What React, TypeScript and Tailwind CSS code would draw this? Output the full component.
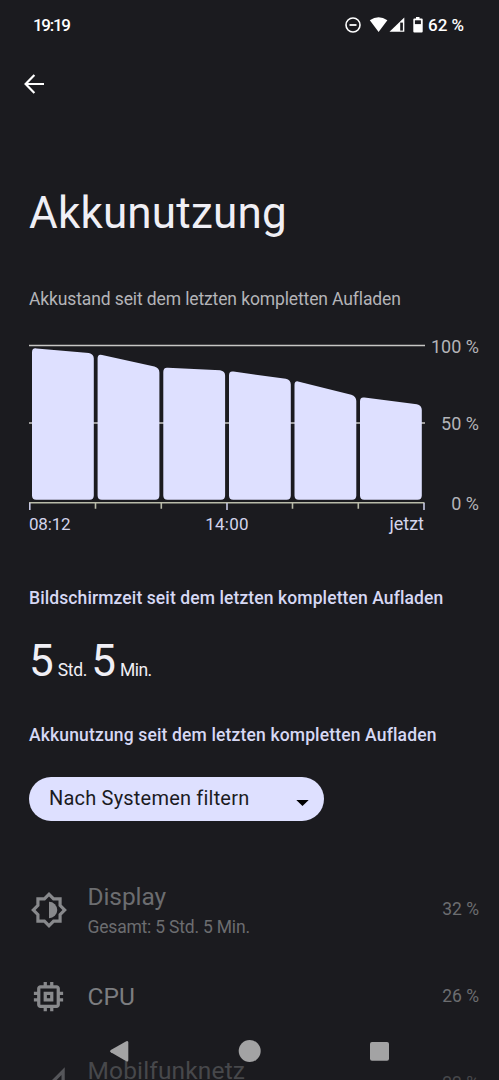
import { ReactNode } from "react";

const levels = [
  { x: 32, left: 348, right: 353.5 },
  { x: 97.6, left: 354, right: 367.5 },
  { x: 163.3, left: 367.5, right: 370.5 },
  { x: 229, left: 371, right: 379.5 },
  { x: 294.5, left: 380.5, right: 396 },
  { x: 360, left: 397, right: 405 },
];

function barPath(x: number, l: number, r: number) {
  const w = 61.8;
  const slope = (r - l) / w;
  return `M${x} ${l + 4.5}Q${x} ${l - 0.3} ${x + 4.5} ${l + 4.5 * slope}L${x + w - 5} ${r - 5 * slope}Q${x + w} ${r + 0.6} ${x + w} ${r + 5}V495.5Q${x + w} 499.7 ${x + w - 4.2} 499.7H${x + 4.2}Q${x} 499.7 ${x} 495.5Z`;
}

function StatusBar() {
  return (
    <header className="flex h-[50px] shrink-0 items-center pr-[34px] pl-[33px] text-[17px] leading-5 font-medium text-white">
      <span className="flex-1 tracking-[-1.3px]">19:19</span>
      <svg className="h-6 w-[82px]" viewBox="344 13 82 24">
        <circle cx="353" cy="25" r="7" fill="none" stroke="#fff" strokeWidth="1.6" />
        <path d="M349.5 25h7" stroke="#fff" strokeWidth="1.8" />
        <path d="M369.8 20.2Q378.5 14.2 387.4 20.2L378.6 32Z" fill="#fff" />
        <path d="M404.3 17.5V31.8H389.5Z" fill="#fff" />
        <path d="M400.2 22.6h2.7v8h-2.7z" fill="#1b1b1f" />
        <path d="M416 17h3.5v1.5h2.2q1 0 1 1v12q0 1-1 1h-7.4q-1 0-1-1v-12q0-1 1-1H416z" fill="#fff" />
        <path d="M414.9 20.3h6v3.8h-6z" fill="#1b1b1f" />
      </svg>
      <span className="ml-0.5 w-[37px] whitespace-nowrap">62 %</span>
    </header>
  );
}

function BatteryChart() {
  return (
    <section className="mt-[25px] flex h-[198px] w-[450px] text-[#b4b4b8]">
      <div className="w-[396px]">
        <svg className="h-[178px] w-[397px]" viewBox="29 336 397 178">
          <path d="M29 345.5H425M29 423H425" stroke="#c7c6c4" strokeWidth="1.6" />
          <path d="M29 502.8H424.5M95.5 503v5.7M161.3 503v5.7M292.5 503v5.7M358.3 503v5.7" fill="none" stroke="#b9bba9" strokeWidth="1.6" />
          <path d="M29.8 503v7M227 503v7M424 503v7" stroke="#c5c7e2" strokeWidth="1.6" />
          {levels.map((b) => (
            <path key={b.x} d={barPath(b.x, b.left, b.right)} fill="#dee0ff" />
          ))}
        </svg>
        <div className="flex justify-between text-[17px] leading-5 text-[#d3d4ec]">
          <span className="w-[42px] tracking-[-0.2px]">08:12</span>
          <span className="tracking-[0.2px]">14:00</span>
          <span className="w-[42px] pr-px text-right text-[18px]">jetzt</span>
        </div>
      </div>
      <div className="flex h-[178px] flex-1 flex-col pt-px text-right text-[18px] leading-5">
        <span className="whitespace-nowrap">100 %</span>
        <span className="mt-[57px]">50 %</span>
        <span className="mt-[60px]">0 %</span>
      </div>
    </section>
  );
}

type RowProps = { icon: ReactNode; name: string; detail?: string; share: string };

function UsageRow({ icon, name, detail, share }: RowProps) {
  return (
    <li className="flex h-[87px] shrink-0 items-center text-[#6c6d70]">
      <div className="flex w-[39px] justify-center text-[#88898c]">{icon}</div>
      <div className="ml-[19.5px] flex-1">
        <div className={detail ? "text-[24.5px] leading-[34px] tracking-[-0.1px]" : "text-[24.5px] leading-[34px] text-[#7c7d80]"}>{name}</div>
        {detail && <div className="text-[17.5px] leading-[26px] tracking-[-0.2px]">{detail}</div>}
      </div>
      <span className="text-[17.5px]">{share}</span>
    </li>
  );
}

export default function App() {
  return (
    <main className="relative flex h-[1080px] w-[499px] flex-col overflow-hidden bg-[#1b1b1f] font-['Roboto',sans-serif] text-[#f0eff5]">
      <StatusBar />
      <nav className="flex h-[68px] shrink-0 items-center pl-[24px]">
        <svg className="size-5" viewBox="0 0 20 20" fill="none" stroke="#fff" strokeWidth="2.2">
          <path d="M20 10H2.3M10.4 1L1.6 10L10.4 19" />
        </svg>
      </nav>
      <div className="flex shrink-0 flex-col pr-[20px] pl-[29px]">
        <h1 className="mt-[69px] text-[44px] leading-[52px] tracking-[0.2px]">Akkunutzung</h1>
        <p className="mt-12 text-[17.5px] leading-6 tracking-[-0.12px] text-[#b4b4b8]">Akkustand seit dem letzten kompletten Aufladen</p>
        <BatteryChart />
        <h2 className="mt-[52px] text-[17.5px] leading-6 font-medium tracking-[0.1px] text-[#d6d8f4]">Bildschirmzeit seit dem letzten kompletten Aufladen</h2>
        <p className="mt-[25px] flex h-[52px] items-baseline text-[44px] leading-[52px]">
          5<span className="mr-1 ml-1 text-[17.5px] tracking-[-0.3px]">Std.</span>
          5<span className="ml-1 text-[17.5px] tracking-[-0.5px]">Min.</span>
        </p>
        <h2 className="mt-9 text-[17.5px] leading-6 font-medium tracking-[0.15px] text-[#d6d8f4]">Akkunutzung seit dem letzten kompletten Aufladen</h2>
        <button className="mt-[30px] flex h-11 w-[294.5px] items-center justify-between rounded-full bg-[#dee0ff] pr-[15px] pb-[2px] pl-5 text-[20px] tracking-[0.2px] text-[#1b1b1f]">
          Nach Systemen filtern
          <svg className="mt-[9px] h-[6px] w-[13px]" viewBox="0 0 13 6">
            <path d="M.3 0h12.4L6.5 6z" fill="#000" />
          </svg>
        </button>
        <ul className="mt-[45px] flex flex-col">
          <UsageRow
            name="Display"
            detail="Gesamt: 5 Std. 5 Min."
            share="32 %"
            icon={
              <svg className="size-[38px] shrink-0" viewBox="0 0 24 24" fill="currentColor">
                <path fillRule="evenodd" d="M20 8.69V4h-4.69L12 .69 8.69 4H4v4.69L.69 12 4 15.31V20h4.69L12 23.31 15.31 20H20v-4.69L23.31 12zM18 14.48V18h-3.52L12 20.48 9.52 18H6v-3.52L3.52 12 6 9.52V6h3.52L12 3.52 14.48 6H18v3.52L20.48 12z" />
                <path d="M12 6.8a5.2 5.2 0 0 1 0 10.4z" />
              </svg>
            }
          />
          <UsageRow
            name="CPU"
            share="26 %"
            icon={
              <svg className="size-[39px] shrink-0" viewBox="0 0 24 24" fill="currentColor">
                <path d="M15 9H9v6h6V9zm-2 4h-2v-2h2v2zm8-2V9h-2V7c0-1.1-.9-2-2-2h-2V3h-2v2h-2V3H9v2H7c-1.1 0-2 .9-2 2v2H3v2h2v2H3v2h2v2c0 1.1.9 2 2 2h2v2h2v-2h2v2h2v-2h2c1.1 0 2-.9 2-2v-2h2v-2h-2v-2h2zm-4 6H7V7h10v10z" />
              </svg>
            }
          />
          <li className="flex h-[87px] items-start text-[#47484b]">
            <svg className="mt-[24px] size-[39px] shrink-0 text-[#55565a]" viewBox="0 0 24 24" fill="currentColor">
              <path d="M20 6.83V20H6.83L20 6.83M22 2L2 22h20V2z" />
            </svg>
            <span className="mt-[14px] ml-[19.5px] flex-1 text-[24.5px] leading-[34px] tracking-[0.15px]">Mobilfunknetz</span>
            <span className="mt-[31px] text-[17.5px] leading-6">22 %</span>
          </li>
        </ul>
      </div>
      <svg className="absolute bottom-0 left-0 h-[60px] w-[499px]" viewBox="0 1020 499 60" fill="#a3a3a4">
        <path d="M126.3 1041.2Q128.3 1040.3 128.3 1042.5V1060Q128.3 1062.2 126.3 1061.2L110.8 1052.2Q109 1051 110.8 1049.9Z" />
        <circle cx="249.7" cy="1051" r="11" />
        <rect x="370" y="1042" width="19" height="18.7" rx="2" />
      </svg>
    </main>
  );
}
